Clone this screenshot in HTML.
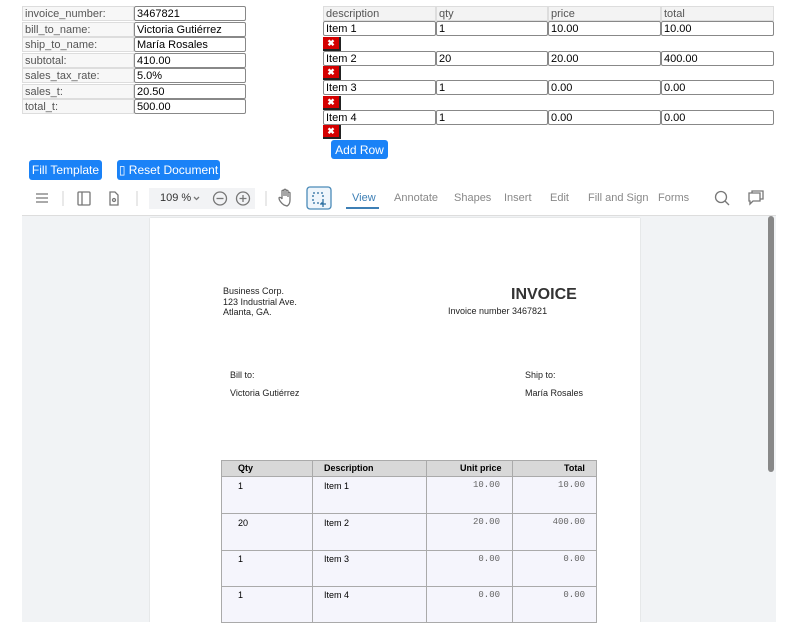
<!DOCTYPE html>
<html><head><meta charset="utf-8"><style>
*{box-sizing:border-box;margin:0;padding:0}
body{width:800px;height:633px;overflow:hidden;background:#fff;font-family:"Liberation Sans",Arial,sans-serif;position:relative;color:#000}
.a{position:absolute}
.lbl{position:absolute;left:22px;width:112px;height:15px;border:1px solid #ddd;background:#f7f7f7;color:#555;font-size:11px;line-height:12px;padding:1px 0 0 2px}
.inp{position:absolute;height:15px;border:1px solid #888;border-radius:2px;background:#fff;font-size:11px;line-height:12px;padding:1px 0 0 2px}
.hdr{position:absolute;top:6px;height:15px;border:1px solid #ddd;background:#f3f3f3;color:#555;font-size:11px;line-height:12px;padding:1px 0 0 2px}
.x{position:absolute;left:323px;width:18px;height:14px;background:#d40000;border-right:2px solid #222;border-bottom:2px solid #222;color:#fff;font-size:9px;line-height:12px;text-align:center;font-weight:bold}
.btn{position:absolute;background:#1a82f7;color:#fff;font-size:12px;border-radius:3px;text-align:center;line-height:20px}
.tb{position:absolute;top:192px;font-size:11px;color:#888}
.pt{position:absolute;font-size:9px;color:#222}
.tc{position:absolute;font-size:9px}
</style></head><body>
<div class="lbl" style="top:6px">invoice_number:</div><div class="inp" style="top:6px;left:134px;width:112px">3467821</div>
<div class="lbl" style="top:21.5px">bill_to_name:</div><div class="inp" style="top:21.5px;left:134px;width:112px">Victoria Gutiérrez</div>
<div class="lbl" style="top:37px">ship_to_name:</div><div class="inp" style="top:37px;left:134px;width:112px">María Rosales</div>
<div class="lbl" style="top:52.5px">subtotal:</div><div class="inp" style="top:52.5px;left:134px;width:112px">410.00</div>
<div class="lbl" style="top:68px">sales_tax_rate:</div><div class="inp" style="top:68px;left:134px;width:112px">5.0%</div>
<div class="lbl" style="top:83.5px">sales_t:</div><div class="inp" style="top:83.5px;left:134px;width:112px">20.50</div>
<div class="lbl" style="top:99px">total_t:</div><div class="inp" style="top:99px;left:134px;width:112px">500.00</div>

<div class="hdr" style="left:323px;width:113px">description</div>
<div class="hdr" style="left:436px;width:112px">qty</div>
<div class="hdr" style="left:548px;width:113px">price</div>
<div class="hdr" style="left:661px;width:113px">total</div>

<div class="inp" style="top:21px;left:323px;width:113px">Item 1</div><div class="inp" style="top:21px;left:436px;width:112px">1</div><div class="inp" style="top:21px;left:548px;width:113px">10.00</div><div class="inp" style="top:21px;left:661px;width:113px">10.00</div>
<div class="x" style="top:37px">✖</div>
<div class="inp" style="top:51px;left:323px;width:113px">Item 2</div><div class="inp" style="top:51px;left:436px;width:112px">20</div><div class="inp" style="top:51px;left:548px;width:113px">20.00</div><div class="inp" style="top:51px;left:661px;width:113px">400.00</div>
<div class="x" style="top:66px">✖</div>
<div class="inp" style="top:80px;left:323px;width:113px">Item 3</div><div class="inp" style="top:80px;left:436px;width:112px">1</div><div class="inp" style="top:80px;left:548px;width:113px">0.00</div><div class="inp" style="top:80px;left:661px;width:113px">0.00</div>
<div class="x" style="top:96px">✖</div>
<div class="inp" style="top:110px;left:323px;width:113px">Item 4</div><div class="inp" style="top:110px;left:436px;width:112px">1</div><div class="inp" style="top:110px;left:548px;width:113px">0.00</div><div class="inp" style="top:110px;left:661px;width:113px">0.00</div>
<div class="x" style="top:125px">✖</div>
<div class="btn" style="left:331px;top:140px;width:57px;height:19px">Add Row</div>
<div class="btn" style="left:29px;top:160px;width:73px;height:20px">Fill Template</div>
<div class="btn" style="left:117px;top:160px;width:103px;height:20px">▯ Reset Document</div>

<div class="a" style="left:22px;top:215px;width:754px;height:1px;background:#ddd"></div>
<svg class="a" style="left:30px;top:185px" width="740" height="28" viewBox="0 0 740 28" fill="none" stroke="#777" stroke-width="1.3">
<path d="M6 9h12M6 13h12M6 17h12"/>
<line x1="33" y1="6" x2="33" y2="21" stroke="#ddd"/>
<rect x="48" y="7" width="12" height="13" rx="1"/><line x1="52" y1="7" x2="52" y2="20"/>
<path d="M80 7h5l3 3v10h-8z"/><circle cx="84" cy="15" r="1.5"/>
<line x1="107" y1="6" x2="107" y2="21" stroke="#ddd"/>
<rect x="119" y="3" width="106" height="21" fill="#f2f3f5" stroke="none"/>
<path d="M164 12l2.5 2.5 2.5-2.5"/>
<circle cx="190" cy="13.5" r="6.5"/><path d="M186.5 13.5h7"/>
<circle cx="213" cy="13.5" r="6.5"/><path d="M209.5 13.5h7M213 10v7"/>
<line x1="236" y1="6" x2="236" y2="21" stroke="#ddd"/>
<path d="M254 20c-3-2-5-5-5-7 0-1 2-1 3 1v-8c0-1 2-1 2 0v5-6c0-1 2-1 2 0v6-5c0-1 2-1 2 0v6-4c0-1 2-1 2 0v7c0 3-1 5-3 6z"/>
<rect x="277" y="2" width="24" height="22" rx="3" stroke="#4a8ab8" fill="#eef5fb"/>
<path d="M283 8h10v10h-10z" stroke="#2b6ea0" stroke-dasharray="2 2"/><path d="M293 16v6M290 19h6" stroke="#2b6ea0"/>
<circle cx="691" cy="12" r="5.5"/><path d="M695 16l4 4"/>
<path d="M719 8h11v8h-7l-3 3v-3h-1z"/><path d="M722 8V6h11v8h-3"/>
</svg>
<div class="tb" style="left:160px;color:#333">109 %</div>
<div class="tb" style="left:352px;color:#3d7fb5">View</div>
<div class="a" style="left:346px;top:207px;width:33px;height:2px;background:#3d7fb5"></div>
<div class="tb" style="left:394px">Annotate</div>
<div class="tb" style="left:454px">Shapes</div>
<div class="tb" style="left:504px">Insert</div>
<div class="tb" style="left:550px">Edit</div>
<div class="tb" style="left:588px">Fill and Sign</div>
<div class="tb" style="left:658px">Forms</div>

<div class="a" style="left:22px;top:216px;width:754px;height:406px;background:#f1f3f5;overflow:hidden">
<div class="a" style="left:128px;top:2px;width:490px;height:420px;background:#fff;box-shadow:0 0 1px #bbb"></div>
<div class="a" style="left:746px;top:0;width:6px;height:256px;background:#888;border-radius:3px"></div>
</div>
<div class="pt" style="left:223px;top:286px;line-height:10.5px">Business Corp.<br>123 Industrial Ave.<br>Atlanta, GA.</div>
<div class="a" style="left:511px;top:286px;font-size:16px;font-weight:bold;color:#333">INVOICE</div>
<div class="pt" style="left:448px;top:306px">Invoice number 3467821</div>
<div class="pt" style="left:230px;top:370px">Bill to:</div>
<div class="pt" style="left:230px;top:388px">Victoria Gutiérrez</div>
<div class="pt" style="left:525px;top:370px">Ship to:</div>
<div class="pt" style="left:525px;top:388px">María Rosales</div>
<svg class="a" style="left:221px;top:460px" width="376" height="163">
<rect x="0.5" y="0.5" width="375" height="16" fill="#d8d8d8" stroke="#aaa"/>
<rect x="0.5" y="16.5" width="375" height="146" fill="#f5f5fc" stroke="#aaa"/>
<g stroke="#aaa"><path d="M0 53.5h376M0 90.5h376M0 126.5h376M91.5 0v163M205.5 0v163M291.5 0v163"/></g>
</svg>
<div class="tc" style="left:238px;top:463px;font-weight:bold">Qty</div>
<div class="tc" style="left:324px;top:463px;font-weight:bold">Description</div>
<div class="tc" style="left:460px;top:463px;font-weight:bold">Unit price</div>
<div class="tc" style="left:564px;top:463px;font-weight:bold">Total</div>
<div class="tc" style="left:238px;top:481px">1</div><div class="tc" style="left:324px;top:481px">Item 1</div>
<div class="tc" style="left:238px;top:518px">20</div><div class="tc" style="left:324px;top:518px">Item 2</div>
<div class="tc" style="left:238px;top:554px">1</div><div class="tc" style="left:324px;top:554px">Item 3</div>
<div class="tc" style="left:238px;top:590px">1</div><div class="tc" style="left:324px;top:590px">Item 4</div>
<div class="tc" style="right:300px;top:480px;font-family:'Liberation Mono',monospace;color:#666">10.00</div><div class="tc" style="right:215px;top:480px;font-family:'Liberation Mono',monospace;color:#666">10.00</div>
<div class="tc" style="right:300px;top:517px;font-family:'Liberation Mono',monospace;color:#666">20.00</div><div class="tc" style="right:215px;top:517px;font-family:'Liberation Mono',monospace;color:#666">400.00</div>
<div class="tc" style="right:300px;top:554px;font-family:'Liberation Mono',monospace;color:#666">0.00</div><div class="tc" style="right:215px;top:554px;font-family:'Liberation Mono',monospace;color:#666">0.00</div>
<div class="tc" style="right:300px;top:590px;font-family:'Liberation Mono',monospace;color:#666">0.00</div><div class="tc" style="right:215px;top:590px;font-family:'Liberation Mono',monospace;color:#666">0.00</div>
</body></html>
